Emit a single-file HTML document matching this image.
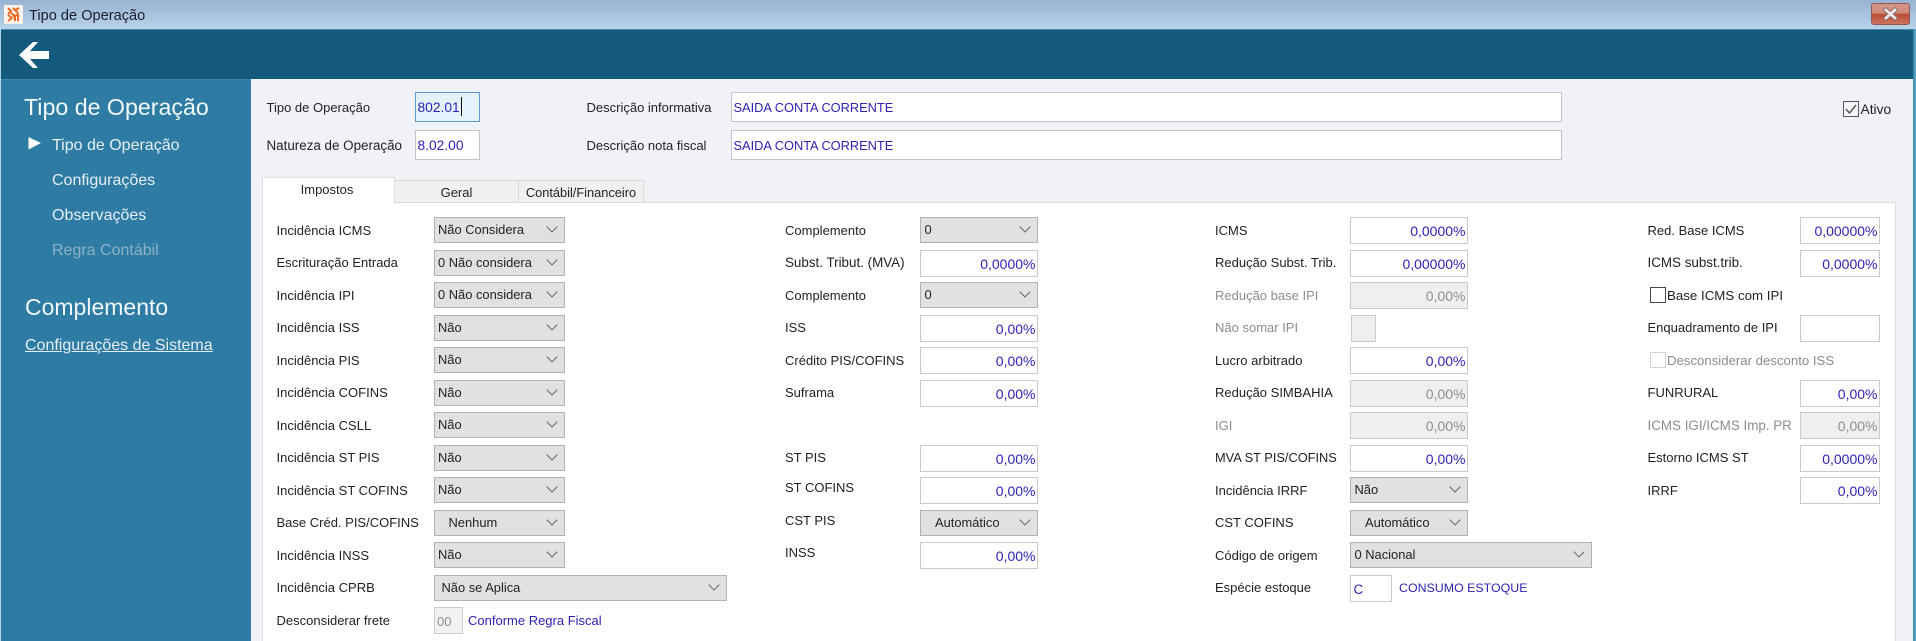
<!DOCTYPE html>
<html lang="pt"><head><meta charset="utf-8"><title>Tipo de Operação</title>
<style>
*{box-sizing:border-box;margin:0;padding:0}
html,body{width:1916px;height:641px;overflow:hidden;background:#f0f2f8}
body{position:relative;font-family:"Liberation Sans",sans-serif;font-size:13px;color:#222}
div,span{position:absolute;white-space:nowrap}
#w{left:0;top:0;width:1916px;height:641px;filter:blur(.35px)}
#tb{left:-4px;top:-4px;width:1924px;height:33px;background:linear-gradient(#93afce,#b8d2ea)}
#hd{left:1px;top:29px;width:1912px;height:50px;background:#145a7c;border-top:1px solid #4d87a6}
#sb{left:1px;top:79px;width:250px;height:570px;background:#2e7ba3;border-top:1px solid #3d88ad}
#rf{left:1913px;top:29px;width:7px;height:620px;background:linear-gradient(90deg,#2f86ad,#b4d3e8)}
#lf{left:-4px;top:29px;width:5px;height:620px;background:#b4d3e8}
.sh{color:#f2f7fa;font-size:23px;line-height:30px;height:30px}
.si{color:#e6eff4;font-size:16px;line-height:20px;height:20px;left:52px}
#panel{left:262px;top:202px;width:1634px;height:449px;background:#fff;border:1px solid #dcdde2;border-bottom:0}
.t{top:180px;height:23px;background:#f0f0f0;border:1px solid #d9d9d9;border-bottom:1px solid #d9d9d9;text-align:center;line-height:23px;font-size:13px;color:#222}
.l{font-size:13px;line-height:20px;height:20px;color:#222}
.g{color:#8c8c8c}
.s{width:131px;height:26px;background:#e1e1e1;border:1.5px solid #b2b2b2;font-size:12.9px;line-height:24px;padding-left:3.5px;color:#222}
.s::after{content:"";position:absolute;right:8px;top:5px;width:7px;height:7px;border-right:1.3px solid #666;border-bottom:1.3px solid #666;transform:rotate(45deg)}
.i{width:118px;height:27px;background:#fff;border:1.5px solid #c9c9ce;font-size:14px;line-height:27px;text-align:right;padding-right:1.5px;color:#2f22b5}
.d{background:#efefef;color:#8e8e8e;border-color:#c9c9ce}
.w{width:80px}.c2{left:920px}.c3{left:1350px}.c4{left:1800px}
.w1{width:118px}
.ct{padding-left:14px}
.top{height:29.5px;background:#fff;border:1.5px solid #c3c3c9;font-size:13.8px;line-height:29px;color:#2f22b5;padding-left:1.5px}
.tw{font-size:12.8px;line-height:30px;padding-left:1.5px}
.b{color:#2f22b5;font-size:13px;line-height:20px;height:20px}
</style></head><body><div id="w">
<div id="tb"></div>
<svg style="position:absolute;left:4px;top:5px" width="19" height="19" viewBox="0 0 19 19"><rect width="19" height="19" rx="1" fill="#fbf3ec"/><path d="M4 3l3 3-3 3M9 3l5 5M15 3l-4 2M4 10l4 3-4 3M9 10l2 2v4M14 10v6M7 8l4 3 4-2" stroke="#ee6a23" stroke-width="2" fill="none"/></svg>
<div style="left:29px;top:6px;font-size:14.6px;line-height:20px;color:#1c1c2c">Tipo de Operação</div>
<div style="left:1871px;top:3px;width:39px;height:22px;border:1px solid #8c5a52;border-radius:3px;background:linear-gradient(#d6968a 0,#d08a7a 45%,#bb4c33 52%,#cc7360 100%)"></div>
<svg style="position:absolute;left:1883px;top:7px" width="15" height="14" viewBox="0 0 15 14"><path d="M3 3l9 8M12 3l-9 8" stroke="#7d6464" stroke-width="4.4" stroke-linecap="square"/><path d="M3 3l9 8M12 3l-9 8" stroke="#ece8e8" stroke-width="2.8" stroke-linecap="square"/></svg>
<div id="hd"></div>
<svg style="position:absolute;left:0;top:29px" width="60" height="50" viewBox="0 29 60 50"><path d="M19 55L33 42H38L30 51H49V59H30L38 68H33Z" fill="#fff"/></svg>
<div id="lf"></div><div id="rf"></div>
<div id="sb"></div>
<div class="sh" style="left:24px;top:92px;font-size:23.2px">Tipo de Operação</div>
<svg style="position:absolute;left:27px;top:136px" width="15" height="15"><path d="M1.5 1L14 7L1.5 13.5Z" fill="#fff"/></svg>
<div class="si" style="top:136px">Tipo de Operação</div>
<div class="si" style="top:171px">Configurações</div>
<div class="si" style="top:206px">Observações</div>
<div class="si" style="top:241px;color:#8db2c6">Regra Contábil</div>
<div class="sh" style="left:25px;top:292px">Complemento</div>
<div class="si" style="left:25px;top:336px;text-decoration:underline">Configurações de Sistema</div>

<div class="l" style="left:266.5px;top:97.5px">Tipo de Operação</div>
<div class="l" style="left:266.5px;top:135.5px;font-size:13.4px">Natureza de Operação</div>
<div class="top" style="left:415px;top:92px;width:65px;background:#e5f1fb;border-color:#5a9bd5">802.01<span style="left:45px;top:4px;width:1px;height:19px;background:#111"></span></div>
<div class="top" style="left:415px;top:130px;width:65px">8.02.00</div>
<div class="l" style="left:586.5px;top:97.5px">Descrição informativa</div>
<div class="l" style="left:586.5px;top:135.5px">Descrição nota fiscal</div>
<div class="top tw" style="left:731px;top:92px;width:831px">SAIDA CONTA CORRENTE</div>
<div class="top tw" style="left:731px;top:130px;width:831px">SAIDA CONTA CORRENTE</div>
<div style="left:1843px;top:101px;width:16px;height:16px;border:1.5px solid #555;background:#f4f5f8"></div>
<svg style="position:absolute;left:1843px;top:101px" width="16" height="16"><path d="M3 8l3.5 4L13 4" stroke="#555" stroke-width="1.4" fill="none"/></svg>
<div class="l" style="left:1860.5px;top:100px;font-size:13.8px">Ativo</div>

<div id="panel"></div>
<div class="t" style="left:394px;width:125px">Geral</div>
<div class="t" style="left:518px;width:126px;font-size:12.8px">Contábil/Financeiro</div>
<div style="left:262px;top:177px;width:133px;height:27px;background:#fff;border:1px solid #dcdde2;border-bottom:0;text-align:center;line-height:23px;font-size:13px;padding-right:3px">Impostos</div>

<!-- col 1 -->
<div class="l" style="left:276.5px;top:220.5px">Incidência ICMS</div><div class="s" style="left:433.5px;top:217px">Não Considera</div>
<div class="l" style="left:276.5px;top:253px">Escrituração Entrada</div><div class="s" style="left:433.5px;top:250px">0 Não considera</div>
<div class="l" style="left:276.5px;top:285.5px">Incidência IPI</div><div class="s" style="left:433.5px;top:282px">0 Não considera</div>
<div class="l" style="left:276.5px;top:318px">Incidência ISS</div><div class="s" style="left:433.5px;top:315px">Não</div>
<div class="l" style="left:276.5px;top:350.5px">Incidência PIS</div><div class="s" style="left:433.5px;top:347px">Não</div>
<div class="l" style="left:276.5px;top:383px">Incidência COFINS</div><div class="s" style="left:433.5px;top:380px">Não</div>
<div class="l" style="left:276.5px;top:415.5px">Incidência CSLL</div><div class="s" style="left:433.5px;top:412px">Não</div>
<div class="l" style="left:276.5px;top:448px">Incidência ST PIS</div><div class="s" style="left:433.5px;top:445px">Não</div>
<div class="l" style="left:276.5px;top:480.5px">Incidência ST COFINS</div><div class="s" style="left:433.5px;top:477px">Não</div>
<div class="l" style="left:276.5px;top:513px">Base Créd. PIS/COFINS</div><div class="s" style="left:433.5px;top:510px;padding-left:14px">Nenhum</div>
<div class="l" style="left:276.5px;top:545.5px">Incidência INSS</div><div class="s" style="left:433.5px;top:542px">Não</div>
<div class="l" style="left:276.5px;top:578px">Incidência CPRB</div><div class="s" style="left:433.5px;top:575px;width:293px;padding-left:7px">Não se Aplica</div>
<div class="l" style="left:276.5px;top:610.5px">Desconsiderar frete</div>
<div class="i d" style="left:433.5px;top:607px;width:29px;text-align:left;padding-left:2.5px;font-size:13px;background:#f2f2f2">00</div>
<div class="b" style="left:468px;top:610.5px">Conforme Regra Fiscal</div>

<!-- col 2 -->
<div class="l" style="left:785px;top:220.5px">Complemento</div><div class="s c2 w1" style="top:217px">0</div>
<div class="l" style="left:785px;top:253px;font-size:13.4px">Subst. Tribut. (MVA)</div><div class="i c2" style="top:250px">0,0000%</div>
<div class="l" style="left:785px;top:285.5px">Complemento</div><div class="s c2 w1" style="top:282px">0</div>
<div class="l" style="left:785px;top:318px">ISS</div><div class="i c2" style="top:315px">0,00%</div>
<div class="l" style="left:785px;top:350.5px">Crédito PIS/COFINS</div><div class="i c2" style="top:347px">0,00%</div>
<div class="l" style="left:785px;top:383px">Suframa</div><div class="i c2" style="top:380px">0,00%</div>
<div class="l" style="left:785px;top:448px">ST PIS</div><div class="i c2" style="top:445px">0,00%</div>
<div class="l" style="left:785px;top:478px">ST COFINS</div><div class="i c2" style="top:477px">0,00%</div>
<div class="l" style="left:785px;top:510.5px">CST PIS</div><div class="s c2 w1 ct" style="top:510px">Automático</div>
<div class="l" style="left:785px;top:543px">INSS</div><div class="i c2" style="top:542px">0,00%</div>

<!-- col 3 -->
<div class="l" style="left:1215px;top:220.5px">ICMS</div><div class="i c3" style="top:217px">0,0000%</div>
<div class="l" style="left:1215px;top:253px">Redução Subst. Trib.</div><div class="i c3" style="top:250px">0,00000%</div>
<div class="l g" style="left:1215px;top:285.5px">Redução base IPI</div><div class="i c3 d" style="top:282px">0,00%</div>
<div class="l g" style="left:1215px;top:318px">Não somar IPI</div><div class="i d" style="left:1351px;top:315px;width:25px"></div>
<div class="l" style="left:1215px;top:350.5px">Lucro arbitrado</div><div class="i c3" style="top:347px">0,00%</div>
<div class="l" style="left:1215px;top:383px">Redução SIMBAHIA</div><div class="i c3 d" style="top:380px">0,00%</div>
<div class="l g" style="left:1215px;top:415.5px">IGI</div><div class="i c3 d" style="top:412px">0,00%</div>
<div class="l" style="left:1215px;top:448px;font-size:12.8px">MVA ST PIS/COFINS</div><div class="i c3" style="top:445px">0,00%</div>
<div class="l" style="left:1215px;top:480.5px">Incidência IRRF</div><div class="s c3 w1" style="top:477px">Não</div>
<div class="l" style="left:1215px;top:513px">CST COFINS</div><div class="s c3 w1 ct" style="top:510px">Automático</div>
<div class="l" style="left:1215px;top:545.5px">Código de origem</div><div class="s c3" style="top:542px;width:242px">0 Nacional</div>
<div class="l" style="left:1215px;top:578px">Espécie estoque</div><div class="i c3" style="top:575px;width:42px;text-align:left;padding-left:2.5px;font-size:13.5px">C</div>
<div class="b" style="left:1399px;top:577.5px;font-size:12.4px">CONSUMO ESTOQUE</div>

<!-- col 4 -->
<div class="l" style="left:1647.5px;top:220.5px">Red. Base ICMS</div><div class="i c4 w" style="top:217px">0,00000%</div>
<div class="l" style="left:1647.5px;top:253px;font-size:13.4px">ICMS subst.trib.</div><div class="i c4 w" style="top:250px">0,0000%</div>
<div style="left:1649.5px;top:287px;width:16px;height:16px;border:1.5px solid #444;background:#fff"></div>
<div class="l" style="left:1667px;top:285.5px;font-size:13.3px">Base ICMS com IPI</div>
<div class="l" style="left:1647.5px;top:318px">Enquadramento de IPI</div><div class="i c4 w" style="top:315px"></div>
<div style="left:1649.5px;top:352px;width:16px;height:16px;border:1.5px solid #d4d4d4;background:#fff"></div>
<div class="l g" style="left:1667px;top:350.5px;font-size:13.2px">Desconsiderar desconto ISS</div>
<div class="l" style="left:1647.5px;top:383px">FUNRURAL</div><div class="i c4 w" style="top:380px">0,00%</div>
<div class="l g" style="left:1647.5px;top:415.5px;font-size:13.4px">ICMS IGI/ICMS Imp. PR</div><div class="i c4 w d" style="top:412px">0,00%</div>
<div class="l" style="left:1647.5px;top:448px">Estorno ICMS ST</div><div class="i c4 w" style="top:445px">0,0000%</div>
<div class="l" style="left:1647.5px;top:480.5px">IRRF</div><div class="i c4 w" style="top:477px">0,00%</div>
</div></body></html>
